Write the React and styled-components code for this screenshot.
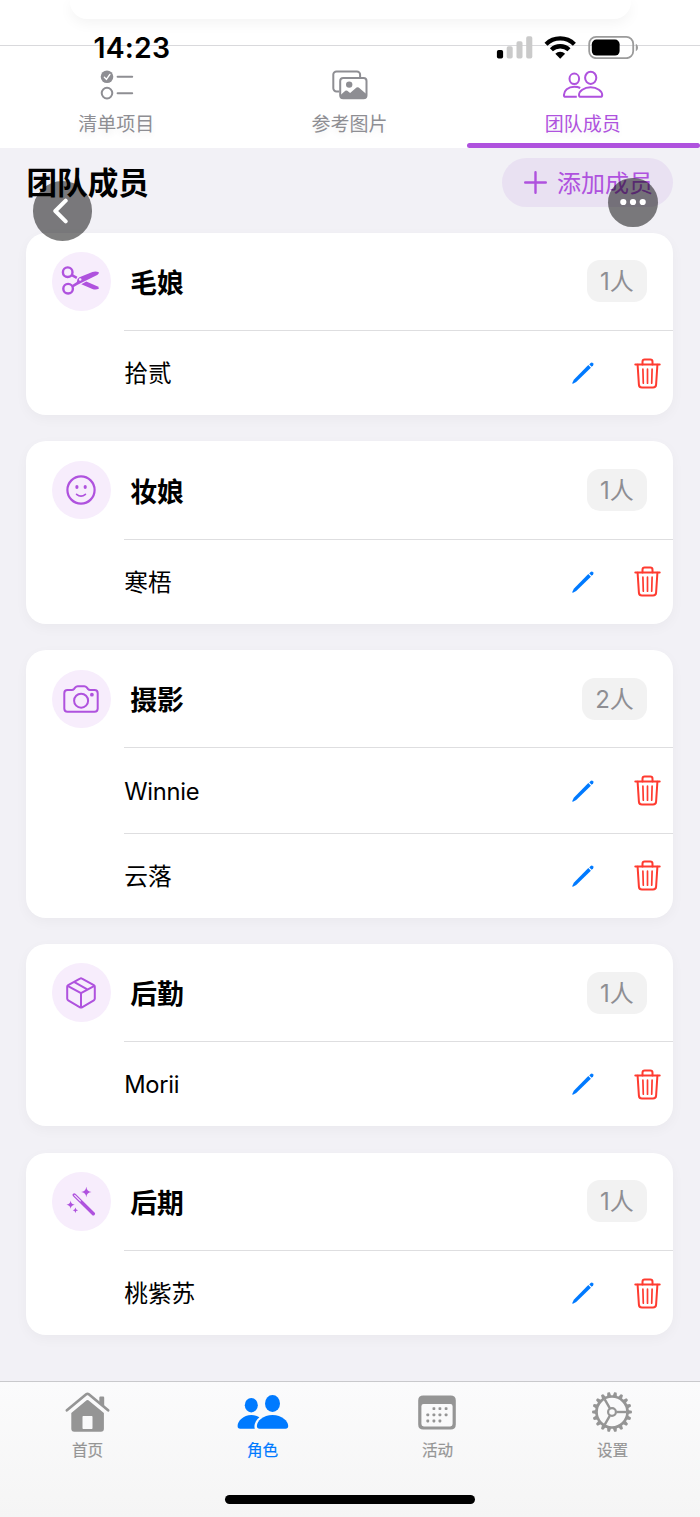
import React, { useState } from 'react';
import styled, { createGlobalStyle } from 'styled-components';

const GlobalStyle = createGlobalStyle`
  * {
    box-sizing: border-box;
  }
  body {
    margin: 0;
    background: #f2f1f6;
    font-family: Inter, "Noto Sans CJK SC", sans-serif;
    color: #000;
  }
  button {
    font-family: inherit;
    border: none;
    padding: 0;
    background: none;
  }
  svg {
    display: block;
    flex-shrink: 0;
  }
`;

const Screen = styled.div`
  position: relative;
  width: 700px;
  height: 1517px;
  display: flex;
  flex-direction: column;
  overflow: hidden;
  background: #f2f1f6;
`;

const Peek = styled.div`
  height: 46px;
  padding: 0 69px 0 70px;
  background: #fff;
  border-bottom: 1px solid #d9d9dc;
`;

const PeekCard = styled.div`
  height: 19px;
  border-radius: 0 0 17px 17px;
  background: #fff;
  box-shadow: 0 4px 14px rgba(0, 0, 0, 0.05);
`;

const StatusBar = styled.div`
  position: absolute;
  top: 33px;
  left: 0;
  width: 100%;
  height: 28px;
  padding: 0 62px 0 93.5px;
  display: flex;
  align-items: center;
  justify-content: space-between;
`;

const Time = styled.span`
  font-size: 28.4px;
  line-height: 28px;
  font-weight: 600;
  letter-spacing: 0.2px;
  padding-top: 2px;
`;

const Tabs = styled.div`
  display: flex;
  height: 102px;
  background: #fff;
`;

const Tab = styled.button`
  flex: 1;
  display: flex;
  flex-direction: column;
  align-items: center;
  padding-top: 24px;
  color: ${(props) => (props.$active ? '#af52de' : '#8e8e93')};
`;

const TabLabel = styled.span`
  font-size: 19px;
  line-height: 24px;
  height: 24px;
  margin-top: 13px;
  padding-right: 1px;
  text-shadow: 0 4px 6px rgba(0, 0, 0, 0.06);
`;

const Indicator = styled.span`
  align-self: stretch;
  height: 5px;
  margin-top: auto;
  border-radius: 2.5px;
  background: ${(props) => (props.$active ? '#af52de' : 'transparent')};
`;

const Header = styled.div`
  height: 84.8px;
  padding: 9.5px 27px 0 26.5px;
  display: flex;
  align-items: flex-start;
  justify-content: space-between;
`;

const Title = styled.h1`
  margin: 0;
  font-size: 30.6px;
  line-height: 49px;
  font-weight: 600;
`;

const AddButton = styled.button`
  width: 171.5px;
  height: 49px;
  border-radius: 25px;
  display: flex;
  align-items: center;
  padding-left: 22.5px;
  gap: 10px;
  background: #e9e1f2;
  color: #af52de;
  font-size: 24px;
  line-height: 49px;
`;

const AddLabel = styled.span`
  padding-top: 2px;
`;

const List = styled.div`
  flex: 1;
  display: flex;
  flex-direction: column;
  gap: 26.2px;
  padding: 0 26.7px 0 26.2px;
`;

const Card = styled.section`
  border-radius: 20px;
  background: #fff;
  box-shadow: 0 4px 13px rgba(0, 0, 0, 0.035);
`;

const CardHead = styled.div`
  height: 97.3px;
  padding: 0 26px;
  display: flex;
  align-items: center;
`;

const RoleIcon = styled.div`
  width: 58.5px;
  height: 58.5px;
  border-radius: 50%;
  display: flex;
  align-items: center;
  justify-content: center;
  padding-right: 1px;
  background: #f7edfc;
  color: #af52de;
`;

const RoleName = styled.h2`
  flex: 1;
  margin: 0 0 0 19.5px;
  padding-top: 3px;
  font-size: 26.8px;
  line-height: 40px;
  font-weight: 600;
`;

const Count = styled.span`
  height: 42px;
  padding: 1px 13.5px 0 13px;
  border-radius: 13px;
  background: #f2f2f2;
  color: #8e8e93;
  font-size: 24px;
  line-height: 42px;
`;

const Member = styled.div`
  height: 85.2px;
  margin-left: 98px;
  padding-right: 12px;
  border-top: 1px solid #dedee0;
  display: flex;
  align-items: center;
`;

const MemberName = styled.span`
  flex: 1;
  padding-top: 2px;
  font-size: 23.7px;
  line-height: 36px;
  letter-spacing: ${(props) => (props.$latin ? '-0.25px' : '0')};
`;

const IconButton = styled.button`
  color: ${(props) => props.$color};
  margin-left: ${(props) => props.$gap || 0}px;
`;

const BottomBar = styled.nav`
  height: 136px;
  border-top: 1px solid #c9c9cc;
  background: linear-gradient(#fbfbfc, #f5f5f5);
  display: flex;
  flex-direction: column;
  align-items: center;
`;

const BottomTabs = styled.div`
  width: 100%;
  height: 113px;
  display: flex;
`;

const BottomTab = styled.button`
  flex: 1;
  display: flex;
  flex-direction: column;
  align-items: center;
  padding-top: 9px;
  color: ${(props) => (props.$active ? '#007aff' : '#959595')};
`;

const BottomIcon = styled.span`
  height: 42px;
  display: flex;
  align-items: center;
  padding-right: ${(props) => props.$nudge || 0}px;
`;

const BottomLabel = styled.span`
  margin-top: 7.500px;
  font-size: 15.6px;
  line-height: 20px;
  -webkit-text-stroke: 0.2px currentColor;
`;

const HomeIndicator = styled.div`
  width: 250px;
  height: 9px;
  border-radius: 5px;
  background: #000;
`;

const Floating = styled.button`
  position: absolute;
  left: ${(props) => props.$x}px;
  top: ${(props) => props.$y}px;
  width: ${(props) => props.$size}px;
  height: ${(props) => props.$size}px;
  border-radius: 50%;
  display: flex;
  align-items: center;
  justify-content: center;
  padding-right: ${(props) => props.$nudge || 0}px;
  background: rgba(0, 0, 0, 0.5);
`;

const StatusIcons = () => (
  <svg width="142" height="24" viewBox="0 0 142 24">
    <rect x="0.9" y="15" width="6.2" height="8.6" rx="1.8" fill="#000" />
    <g fill="#cacaca">
      <rect x="10.7" y="11.2" width="6" height="12.4" rx="1.8" />
      <rect x="20.5" y="6.3" width="6" height="17.3" rx="1.8" />
      <rect x="30.2" y="1.3" width="6.1" height="22.3" rx="1.8" />
    </g>
    <g fill="none" stroke="#000" strokeWidth="4.3">
      <path d="M50 9.2a20.4 20.4 0 0 1 28.4 0" />
      <path d="M55.4 14.8a12.7 12.7 0 0 1 17.6 0" />
    </g>
    <path d="M59.3 18.8a6.9 6.9 0 0 1 9.8 0l-4.9 4.9z" fill="#000" />
    <rect x="93.2" y="1.8" width="44" height="21.4" rx="7" fill="none" stroke="#9b9b9b" strokeWidth="1.8" />
    <rect x="95.8" y="4.6" width="27.8" height="16" rx="4.6" fill="#000" />
    <path d="M139.8 8.7c2.9 1.5 2.9 6.1 0 7.6z" fill="#9b9b9b" />
  </svg>
);

const ChecklistIcon = () => (
  <svg width="34" height="30" viewBox="0 0 34 30">
    <circle cx="7" cy="6.8" r="6.3" fill="currentColor" />
    <path d="M4.4 7.2l2 2.2 3.5-5" fill="none" stroke="#fff" strokeWidth="1.4" strokeLinecap="round" strokeLinejoin="round" />
    <g fill="none" stroke="currentColor" strokeWidth="2" strokeLinecap="round">
      <circle cx="7" cy="23.1" r="5.3" />
      <path d="M17.6 6.8h14.6M17.6 23.2h14.6" />
    </g>
  </svg>
);

const PhotosIcon = () => (
  <svg width="36" height="30" viewBox="0 0 36 30">
    <g fill="none" stroke="currentColor" strokeWidth="2">
      <path d="M7.3 21.4H4.5a3.2 3.2 0 0 1-3.2-3.2V4.6a3.2 3.2 0 0 1 3.2-3.2h20.4a3.2 3.2 0 0 1 3.2 3.2V7.2" />
      <rect x="8.2" y="8" width="26.3" height="20.2" rx="3" />
    </g>
    <circle cx="17.2" cy="14.6" r="3.2" fill="currentColor" />
    <path d="M8 25.4l5.3-4.6q1-.8 2 0l2.8 2.3 6.4-5.5q1.1-.9 2.2 0l7.9 6.7v2.1a2 2 0 0 1-2 2H10a2 2 0 0 1-2-2z" fill="currentColor" />
  </svg>
);

const TeamIcon = () => (
  <svg width="42" height="30" viewBox="0 0 42 30" fill="none" stroke="currentColor" strokeWidth="2">
    <ellipse cx="12.3" cy="8.8" rx="4.8" ry="5.2" />
    <ellipse cx="28.7" cy="7.8" rx="5.6" ry="6.1" />
    <path d="M18.2 18c-1.7-.9-3.7-1.3-5.9-1.3C6 16.7 1.9 20.9 1.9 24.9c0 1.4.6 1.9 1.9 1.9h11" />
    <path d="M28.6 17.2c-6.7 0-11.6 4.1-11.6 7.7 0 1.3.7 1.9 2 1.9h19.2c1.3 0 2-.6 2-1.9 0-3.6-4.9-7.7-11.6-7.7z" />
  </svg>
);

const PlusIcon = () => (
  <svg width="23" height="23" viewBox="0 0 23 23">
    <path d="M11.5 1.200v20.600M1.200 11.500h20.600" stroke="currentColor" strokeWidth="2.4" strokeLinecap="round" />
  </svg>
);

const ScissorsIcon = () => (
  <svg width="40" height="32" viewBox="0 0 40 32">
    <g fill="none" stroke="currentColor" strokeWidth="2.4">
      <circle cx="6.7" cy="7.2" r="4.8" />
      <circle cx="7.1" cy="23.7" r="4.8" />
      <path d="M10.9 10.1l4.9 2.8" />
    </g>
    <path
      fillRule="evenodd"
      d="M10.800 20.200l5-3.200q.2-3.400 2.600-4.700L31.400 7.100q3.200-1.200 6.500.2.200 1.800-1.700 2.700L20 18.100q-4.300 2.100-8 4.500zM19.200 13.200a1.300 1.300 0 1 0 0 2.600 1.300 1.300 0 0 0 0-2.600z"
      fill="currentColor"
    />
    <path d="M20.3 19.300l5-2.700L36.200 21.300q1.800.9 1.700 2.500-3.300 1.400-6.500.2z" fill="currentColor" />
  </svg>
);

const SmileIcon = () => (
  <svg width="32" height="32" viewBox="0 0 32 32">
    <circle cx="16" cy="16" r="13.6" fill="none" stroke="currentColor" strokeWidth="2.2" />
    <ellipse cx="11.9" cy="12.9" rx="1.6" ry="2" fill="currentColor" />
    <ellipse cx="20.2" cy="12.9" rx="1.6" ry="2" fill="currentColor" />
    <path d="M11.6 20.3q4.4 3.5 8.8 0" fill="none" stroke="currentColor" strokeWidth="1.7" strokeLinecap="round" />
  </svg>
);

const CameraIcon = () => (
  <svg width="36" height="28" viewBox="0 0 36 28">
    <g fill="none" stroke="currentColor" strokeWidth="2">
      <path d="M4.500 5h4.300c1 0 1.600-.3 2.200-1l1.300-1.600c.7-.9 1.300-1.200 2.400-1.200h6.600c1.100 0 1.700.3 2.400 1.200L25 4c.6.700 1.200 1 2.200 1h4.300c2 0 3.200 1.200 3.200 3.200v15.300c0 2-1.200 3.200-3.200 3.200h-27c-2 0-3.200-1.200-3.200-3.200V8.200C1.300 6.200 2.500 5 4.500 5z" />
      <circle cx="18.1" cy="15.7" r="7" />
    </g>
    <circle cx="28.9" cy="9.7" r="1.9" fill="currentColor" />
  </svg>
);

const BoxIcon = () => (
  <svg width="30" height="32" viewBox="0 0 30 32" fill="none" stroke="currentColor" strokeWidth="2" strokeLinejoin="round">
    <path d="M14 1.600q1-.6 2 0l11.800 6.500q1 .6 1 1.700v11.800q0 1.200-1 1.800L16 30.300q-1 .6-2 0L2.200 23.400q-1-.6-1-1.800V9.800q0-1.100 1-1.700z" />
    <path d="M1.600 8.800L15 16.200l13.400-7.400M15 16.200v14.300M8 4.900l13.700 7.700" />
  </svg>
);

const WandIcon = () => (
  <svg width="30" height="30" viewBox="0 0 30 30" fill="currentColor">
    <path d="M20.300.8q.5 4.700 5.200 5.200-4.700.5-5.200 5.200-.5-4.700-5.200-5.200 4.700-.5 5.200-5.200z" />
    <path d="M4.600 14.600q.4 3.800 4.100 4.100-3.700.4-4.100 4.100-.4-3.700-4.100-4.100 3.700-.3 4.100-4.100z" />
    <path d="M9.400 21.600q.3 2.400 2.700 2.700-2.400.3-2.700 2.700-.3-2.400-2.700-2.700 2.400-.3 2.700-2.700z" />
    <path d="M8.300 9l19 18.800" stroke="currentColor" strokeWidth="3.400" strokeLinecap="round" />
    <path d="M8.700 9.400l5.600 5.500" stroke="#f7edfc" strokeWidth="1.2" strokeLinecap="round" />
  </svg>
);

const PencilIcon = () => (
  <svg width="22" height="22" viewBox="0 0 22 22" fill="currentColor">
    <path d="M16.300 3.100l2.600 2.600L4.200 20.100.9 21.700Q.1 21.900.3 21.100L1.800 17.700z" />
    <path d="M17.300 2.400l1.300-1.300q1.300-1 2.400.1 1 1.100.1 2.300l-1.400 1.300z" />
  </svg>
);

const TrashIcon = () => (
  <svg width="27" height="31" viewBox="0 0 27 31" fill="none" stroke="currentColor" strokeWidth="2" strokeLinecap="round" strokeLinejoin="round">
    <path d="M1.300 6.600h24.400" />
    <path d="M8.500 6.400V3.700q0-2.200 2.200-2.200h5.600q2.200 0 2.200 2.200v2.700" />
    <path d="M3.600 6.800l1.300 19.800q.2 2.900 3.100 2.900h11q2.900 0 3.100-2.900L23.400 6.800" />
    <path d="M8.900 11.200l.4 14M13.500 11.200v14M18.100 11.200l-.4 14" strokeWidth="1.7" />
  </svg>
);

const HouseIcon = () => (
  <svg width="45" height="41" viewBox="0 0 45 41" fill="currentColor">
    <path d="M1.900 18.300L21.200 2.300q1.300-1 2.600 0l19.300 16" fill="none" stroke="currentColor" strokeWidth="2.7" strokeLinecap="round" />
    <path d="M34.300 10.300V5.700q0-1.100 1.100-1.100h2.700q1.100 0 1.100 1.100v8.900z" />
    <path
      fillRule="evenodd"
      d="M21.600 8.300q.9-.7 1.800 0L38.900 21v15.700q0 3-3 3H9.300q-3 0-3-3V21zM17.500 24.800v11.500q0 .8.8.8h8.400q.8 0 .8-.8V24.800q0-.8-.8-.8h-8.400q-.8 0-.8.8z"
    />
  </svg>
);

const PeopleIcon = () => (
  <svg width="52" height="36" viewBox="0 0 52 36" fill="currentColor">
    <ellipse cx="14.3" cy="11.2" rx="6.5" ry="7.2" />
    <ellipse cx="35.5" cy="9.5" rx="7.5" ry="8.5" />
    <path d="M22.400 23.200c-2.400-1.400-5-2.200-8-2.200C6.300 21 .6 27 .6 32c0 1.800.8 2.700 2.600 2.700h14.600c-1.200-3.800.8-8.300 4.600-11.500z" />
    <path d="M35.500 21c-9.300 0-15.600 6-15.600 11 0 1.800.9 2.700 2.700 2.700h25.900c1.800 0 2.700-.9 2.700-2.700 0-5-6.400-11-15.700-11z" />
  </svg>
);

const CalendarIcon = () => {
  const dots = [[15.9, 13.7], [21.9, 13.7], [28.1, 13.7], [9.8, 19.8], [15.9, 19.8], [21.9, 19.8], [28.1, 19.8], [9.8, 26], [15.9, 26], [21.9, 26]];
  return (
    <svg width="38" height="35" viewBox="0 0 38 35" fill="currentColor">
      <path
        fillRule="evenodd"
        d="M5.300.4h27.400q5.100 0 5.100 5.100v24q0 5-5.100 5H5.300q-5.100 0-5.100-5v-24Q.2.4 5.300.4zM5.600 9Q3.400 9 3.400 11.200v17.900q0 2.400 2.400 2.400h26.400q2.400 0 2.400-2.400V11.200Q34.600 9 32.400 9z"
      />
      {dots.map(([x, y]) => (
        <rect key={`${x}-${y}`} x={x - 1.4} y={y - 1.4} width="2.8" height="2.8" rx="0.8" />
      ))}
    </svg>
  );
};

const GearIcon = () => (
  <svg width="42" height="42" viewBox="-21 -21 42 42" fill="none" stroke="currentColor">
    <circle r="15.5" strokeWidth="2.7" />
    <circle r="3.9" strokeWidth="2.2" />
    {[0, 120, 240].map((angle) => (
      <path key={angle} d="M4.5 0h10" strokeWidth="2.4" transform={`rotate(${angle})`} />
    ))}
    {Array.from({ length: 18 }, (_, i) => (
      <path key={i} d="M16-2.1L19.7-1.3Q20.4 0 19.7 1.3L16 2.1z" fill="currentColor" stroke="none" transform={`rotate(${i * 20})`} />
    ))}
  </svg>
);

const BackIcon = () => (
  <svg width="18" height="26" viewBox="0 0 18 26">
    <path d="M13.7 2.7L3.3 13l10.400 10.300" fill="none" stroke="#fff" strokeWidth="4" strokeLinecap="round" strokeLinejoin="round" />
  </svg>
);

const MoreIcon = () => (
  <svg width="26" height="8" viewBox="0 0 26 8" fill="#fff">
    <circle cx="3.3" cy="4" r="3.1" />
    <circle cx="13" cy="4" r="3.1" />
    <circle cx="22.7" cy="4" r="3.1" />
  </svg>
);

const tabs = [
  { label: '清单项目', icon: <ChecklistIcon /> },
  { label: '参考图片', icon: <PhotosIcon /> },
  { label: '团队成员', icon: <TeamIcon /> },
];

const roles = [
  { name: '毛娘', icon: <ScissorsIcon />, members: ['拾贰'] },
  { name: '妆娘', icon: <SmileIcon />, members: ['寒梧'] },
  { name: '摄影', icon: <CameraIcon />, members: ['Winnie', '云落'] },
  { name: '后勤', icon: <BoxIcon />, members: ['Morii'] },
  { name: '后期', icon: <WandIcon />, members: ['桃紫苏'] },
];

const bottomTabs = [
  { label: '首页', icon: <HouseIcon /> },
  { label: '角色', icon: <PeopleIcon /> },
  { label: '活动', icon: <CalendarIcon />, nudge: 1 },
  { label: '设置', icon: <GearIcon />, nudge: 1 },
];

const App = () => {
  const [tab, setTab] = useState(2);
  const [page, setPage] = useState(1);

  return (
    <>
      <GlobalStyle />
      <Screen>
        <Peek>
          <PeekCard />
        </Peek>
        <Tabs>
          {tabs.map((item, i) => (
            <Tab key={item.label} $active={i === tab} onClick={() => setTab(i)}>
              {item.icon}
              <TabLabel>{item.label}</TabLabel>
              <Indicator $active={i === tab} />
            </Tab>
          ))}
        </Tabs>
        <Header>
          <Title>团队成员</Title>
          <AddButton>
            <PlusIcon />
            <AddLabel>添加成员</AddLabel>
          </AddButton>
        </Header>
        <List>
          {roles.map((role) => (
            <Card key={role.name}>
              <CardHead>
                <RoleIcon>{role.icon}</RoleIcon>
                <RoleName>{role.name}</RoleName>
                <Count>{role.members.length}人</Count>
              </CardHead>
              {role.members.map((member) => (
                <Member key={member}>
                  <MemberName $latin={/^[A-Za-z]+$/.test(member)}>{member}</MemberName>
                  <IconButton $color="#007aff" aria-label="编辑">
                    <PencilIcon />
                  </IconButton>
                  <IconButton $color="#ff3b30" $gap={40.5} aria-label="删除">
                    <TrashIcon />
                  </IconButton>
                </Member>
              ))}
            </Card>
          ))}
        </List>
        <BottomBar>
          <BottomTabs>
            {bottomTabs.map((item, i) => (
              <BottomTab key={item.label} $active={i === page} onClick={() => setPage(i)}>
                <BottomIcon $nudge={item.nudge}>{item.icon}</BottomIcon>
                <BottomLabel>{item.label}</BottomLabel>
              </BottomTab>
            ))}
          </BottomTabs>
          <HomeIndicator />
        </BottomBar>

        <StatusBar>
          <Time>14:23</Time>
          <StatusIcons />
        </StatusBar>
        <Floating $x={32.7} $y={181} $size={59.5} $nudge={3} aria-label="返回">
          <BackIcon />
        </Floating>
        <Floating $x={608.3} $y={177.5} $size={49.5} aria-label="更多">
          <MoreIcon />
        </Floating>
      </Screen>
    </>
  );
};

export default App;
